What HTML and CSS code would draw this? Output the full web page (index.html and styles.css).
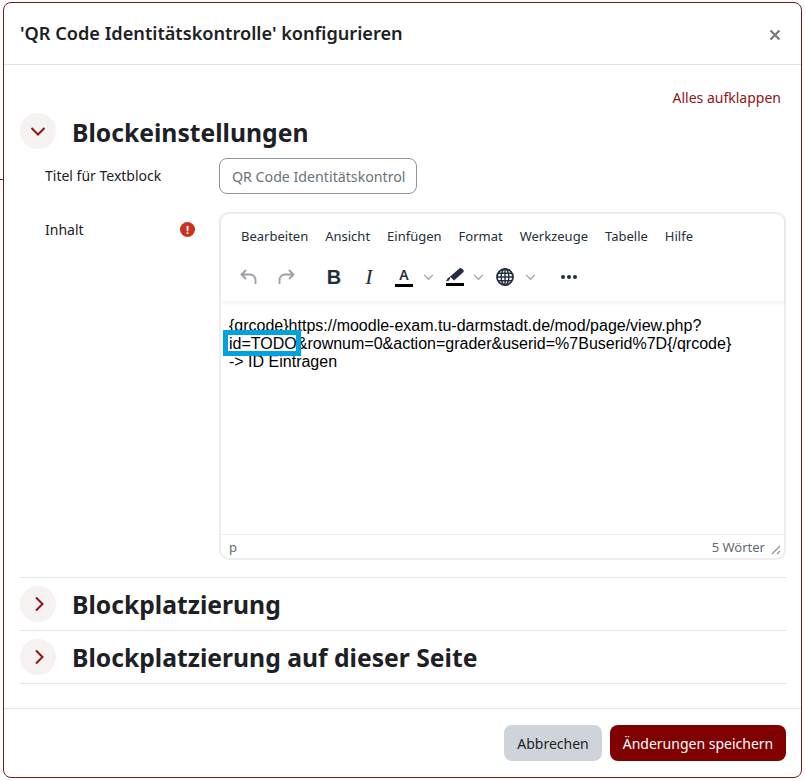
FILE: index.html
```html
<!DOCTYPE html>
<html lang="de">
<head>
<meta charset="utf-8">
<title>Konfigurieren</title>
<link rel="stylesheet" href="styles.css">
</head>
<body>
<span class="edge-tick"></span>
<div class="modal">
  <header class="modal-header">
    <h1 class="modal-title">'QR Code Identitätskontrolle' konfigurieren</h1>
    <svg class="close" viewBox="0 0 12 12" width="12" height="12"><path d="M1.5 1.5l9 9M10.5 1.5l-9 9" stroke="#7a7d80" stroke-width="2.4" fill="none"/></svg>
  </header>
  <main class="modal-body">
    <div class="expand-row"><a class="expand">Alles aufklappen</a></div>
    <section class="section open">
      <div class="section-head">
        <span class="toggle"><svg viewBox="0 0 16 16" width="16" height="16"><path d="M1.5 5l6.500 6.500L14.500 5" stroke="#8f1414" stroke-width="2" fill="none"/></svg></span>
        <h2>Blockeinstellungen</h2>
      </div>
      <div class="form-row title-row">
        <label class="field-label">Titel für Textblock</label>
        <div class="text-input">QR Code Identitätskontrol</div>
      </div>
      <div class="form-row content-row">
        <div class="field-label with-icon">
          <span>Inhalt</span>
          <span class="required">!</span>
        </div>
        <div class="editor">
          <div class="editor-top">
            <nav class="menubar">
              <span>Bearbeiten</span><span>Ansicht</span><span>Einfügen</span><span>Format</span><span>Werkzeuge</span><span>Tabelle</span><span>Hilfe</span>
            </nav>
            <div class="toolbar">
              <div class="tool-group">
                <svg class="tool" viewBox="0 0 20 20" width="20" height="20"><path d="M7 3L2.500 7.500 7 12M3 7.500h8a5.500 5.500 0 0 1 5.500 5.500v4" fill="none" stroke="#9aa0a6" stroke-width="1.800"/></svg>
                <svg class="tool" viewBox="0 0 20 20" width="20" height="20"><path d="M13 3l4.500 4.500L13 12M17 7.500H9A5.500 5.500 0 0 0 3.500 13v4" fill="none" stroke="#9aa0a6" stroke-width="1.800"/></svg>
              </div>
              <div class="tool-group fmt">
                <span class="glyph bold">B</span>
                <span class="glyph italic">I</span>
                <span class="color-tool"><span class="a-letter">A</span><i class="swatch"></i></span>
                <svg class="caret" viewBox="0 0 12 8" width="11" height="7"><path d="M1 1l5 5 5-5" fill="none" stroke="#a3a6ad" stroke-width="1.600"/></svg>
                <span class="color-tool pen"><svg viewBox="0 0 18 14" width="18" height="14"><path d="M0 13.500l3-1 1.500-3.500 3.500 3.500L17 4.500c1-1 1-2 0-3L16 .8c-1-1-2-.8-3 0L4.500 8.200 1.500 10.500z" fill="#222f3e"/></svg><i class="swatch"></i></span>
                <svg class="caret caret-pen" viewBox="0 0 12 8" width="11" height="7"><path d="M1 1l5 5 5-5" fill="none" stroke="#a3a6ad" stroke-width="1.600"/></svg>
                <svg class="globe" viewBox="0 0 18 18" width="18" height="18"><circle cx="9" cy="9" r="8" fill="none" stroke="#222f3e" stroke-width="1.800"/><ellipse cx="9" cy="9" rx="3.800" ry="8" fill="none" stroke="#222f3e" stroke-width="1.400"/><path d="M9 1v16M1 9h16M2 5.200h14M2 12.800h14" stroke="#222f3e" stroke-width="1.400"/></svg>
                <svg class="caret caret-globe" viewBox="0 0 12 8" width="11" height="7"><path d="M1 1l5 5 5-5" fill="none" stroke="#a3a6ad" stroke-width="1.600"/></svg>
              </div>
              <svg class="more" viewBox="0 0 16 4" width="16" height="4"><circle cx="2" cy="2" r="2" fill="#222f3e"/><circle cx="8" cy="2" r="2" fill="#222f3e"/><circle cx="14" cy="2" r="2" fill="#222f3e"/></svg>
            </div>
          </div>
          <div class="editor-content">
            <p>{qrcode}https://moodle-exam.tu-darmstadt.de/mod/page/view.php?<br><span class="mark">id=TODO</span>&amp;rownum=0&amp;action=grader&amp;userid=%7Buserid%7D{/qrcode}<br>-&gt; ID Eintragen</p>
          </div>
          <div class="statusbar">
            <span>p</span>
            <span class="status-right">5 Wörter
              <svg viewBox="0 0 10 10" width="10" height="10"><path d="M9 1L1 9M9 6L6 9" stroke="#8a8f94" stroke-width="1.100" fill="none"/></svg>
            </span>
          </div>
        </div>
      </div>
    </section>
    <section class="section closed first-closed">
      <div class="section-head">
        <span class="toggle"><svg viewBox="0 0 16 16" width="16" height="16"><path d="M6 1.500l6.500 6.500L6 14.500" stroke="#8f1414" stroke-width="2" fill="none"/></svg></span>
        <h2>Blockplatzierung</h2>
      </div>
    </section>
    <section class="section closed">
      <div class="section-head">
        <span class="toggle"><svg viewBox="0 0 16 16" width="16" height="16"><path d="M6 1.500l6.500 6.500L6 14.500" stroke="#8f1414" stroke-width="2" fill="none"/></svg></span>
        <h2>Blockplatzierung auf dieser Seite</h2>
      </div>
    </section>
  </main>
  <footer class="modal-footer">
    <button class="btn btn-secondary">Abbrechen</button>
    <button class="btn btn-primary">Änderungen speichern</button>
  </footer>
</div>
</body>
</html>
```
FILE: styles.css
```css
* { box-sizing: border-box; }
html, body { margin: 0; height: 781px; overflow: hidden; background: #fff; }
body {
  padding: 2px 4px 3px 3px;
  font-family: "Noto Sans", "Open Sans", sans-serif;
  color: #1d2125;
  position: relative;
}
.edge-tick {
  position: absolute;
  left: 0;
  top: 179px;
  width: 3px;
  height: 1px;
  background: #7a2020;
}
.modal {
  height: 776px;
  border: 1px solid #6f1d1d;
  border-radius: 8px;
  display: flex;
  flex-direction: column;
  background: #fff;
}
.modal-header {
  height: 62px;
  flex: none;
  padding: 0 20px 0 16px;
  border-bottom: 1px solid #dee2e6;
  display: flex;
  align-items: center;
  justify-content: space-between;
}
.modal-title {
  margin: 0;
  font-size: 18.15px;
  font-weight: 600;
  line-height: 1.2;
}
.close { margin-top: 2px; }
.modal-body {
  flex: 1;
  padding: 23px 15px 0 16px;
}
.expand-row {
  display: flex;
  justify-content: flex-end;
  padding-right: 5px;
  height: 25px;
}
.expand { color: #8f1414; font-size: 14px; line-height: 20px; }
.section-head {
  display: flex;
  align-items: center;
  gap: 16px;
  height: 36px;
}
.section-head h2 {
  margin: 0;
  font-size: 24.7px;
  font-weight: 700;
  line-height: 36px;
  padding-top: 2px;
}
.open .section-head h2 { padding-top: 3px; }
.toggle {
  width: 36px;
  height: 36px;
  border-radius: 50%;
  background: #f6f2f2;
  display: flex;
  align-items: center;
  justify-content: center;
  flex: none;
}
.form-row { display: flex; }
.title-row { margin-top: 9px; height: 36px; }
.content-row { margin-top: 18px; }
.field-label {
  width: 199px;
  padding-left: 25px;
  font-size: 14px;
  line-height: 20px;
  color: #1d2125;
  padding-top: 8px;
  flex: none;
}
.with-icon {
  display: flex;
  justify-content: space-between;
  align-items: flex-start;
  padding-right: 24px;
}
.required {
  width: 15px;
  height: 15px;
  margin-top: 2px;
  border-radius: 50%;
  background: #ca3120;
  color: #fff;
  font-size: 11px;
  font-weight: 700;
  line-height: 15px;
  text-align: center;
}
.text-input {
  width: 198px;
  height: 36px;
  border: 1px solid #8f959e;
  border-radius: 8px;
  padding: 0 0 0 12px;
  font-size: 14.2px;
  line-height: 36px;
  color: #6a737b;
  white-space: nowrap;
  overflow: hidden;
}
.editor {
  width: 567px;
  height: 348px;
  border: 2px solid #eeeeee;
  border-radius: 10px;
  display: flex;
  flex-direction: column;
}
.editor-top {
  height: 87px;
  flex: none;
  box-shadow: 0 2px 4px rgba(34, 47, 62, 0.07);
  position: relative;
}
.menubar {
  display: flex;
  gap: 17px;
  padding: 12px 0 0 20px;
  font-size: 13px;
  line-height: 20px;
  color: #222f3e;
}
.toolbar {
  display: flex;
  align-items: center;
  height: 40px;
  margin-top: 11px;
  padding-left: 18px;
}
.tool-group { display: flex; align-items: center; gap: 17px; }
.fmt { margin-left: 29px; gap: 0; }
.glyph { color: #222f3e; width: 18px; text-align: center; }
.bold { font-family: "Liberation Sans", sans-serif; font-weight: 700; font-size: 20px; }
.italic { font-family: "Liberation Serif", serif; font-style: italic; font-size: 22px; margin-left: 17px; }
.color-tool {
  display: flex;
  flex-direction: column;
  align-items: center;
  width: 18px;
  margin-left: 17px;
}
.a-letter {
  font-size: 14px;
  font-weight: 600;
  line-height: 14px;
  color: #222f3e;
  height: 15px;
}
.swatch { width: 18px; height: 3px; background: #000; display: block; margin-top: 1px; }
.pen { margin-left: 12px; }
.pen svg { display: block; }
.caret { margin-left: 10px; }
.caret-pen { margin-left: 9px; }
.caret-globe { margin-left: 11px; }
.globe { margin-left: 12px; }
.more { margin-left: 25px; }
.editor-content {
  flex: 1;
  padding: 16px 0 0 8px;
  font-family: "Liberation Sans", sans-serif;
  font-size: 16px;
  line-height: 18px;
  color: #000;
}
.editor-content p { margin: 0; white-space: nowrap; }
.mark { position: relative; }
.mark::after {
  content: "";
  position: absolute;
  left: -6px;
  right: -4px;
  top: -5px;
  bottom: -4px;
  border: 5px solid #00a2e0;
}
.statusbar {
  height: 24px;
  flex: none;
  border-top: 1px solid #eeeeee;
  display: flex;
  justify-content: space-between;
  align-items: center;
  padding: 0 3px 0 8px;
  font-size: 13px;
  color: #5f6b76;
}
.status-right { display: flex; align-items: center; gap: 6px; }
.status-right svg { position: relative; top: 3px; }
.closed { border-top: 1px solid #e3e3e3; height: 53px; padding-top: 8px; }
.first-closed { margin-top: 17px; }
.section.closed:last-child { border-bottom: 1px solid #e3e3e3; height: 54px; }
.modal-footer {
  height: 69px;
  flex: none;
  border-top: 1px solid #e3e3e3;
  display: flex;
  justify-content: flex-end;
  align-items: flex-start;
  gap: 8px;
  padding: 16px 15px 0 0;
}
.btn {
  height: 36px;
  border: 0;
  border-radius: 8px;
  font-family: inherit;
  font-size: 14px;
  padding: 0;
  white-space: nowrap;
}
.btn-secondary { width: 98px; background: #ced4da; color: #1d2125; }
.btn-primary { width: 176px; background: #800000; color: #fff; }
```
